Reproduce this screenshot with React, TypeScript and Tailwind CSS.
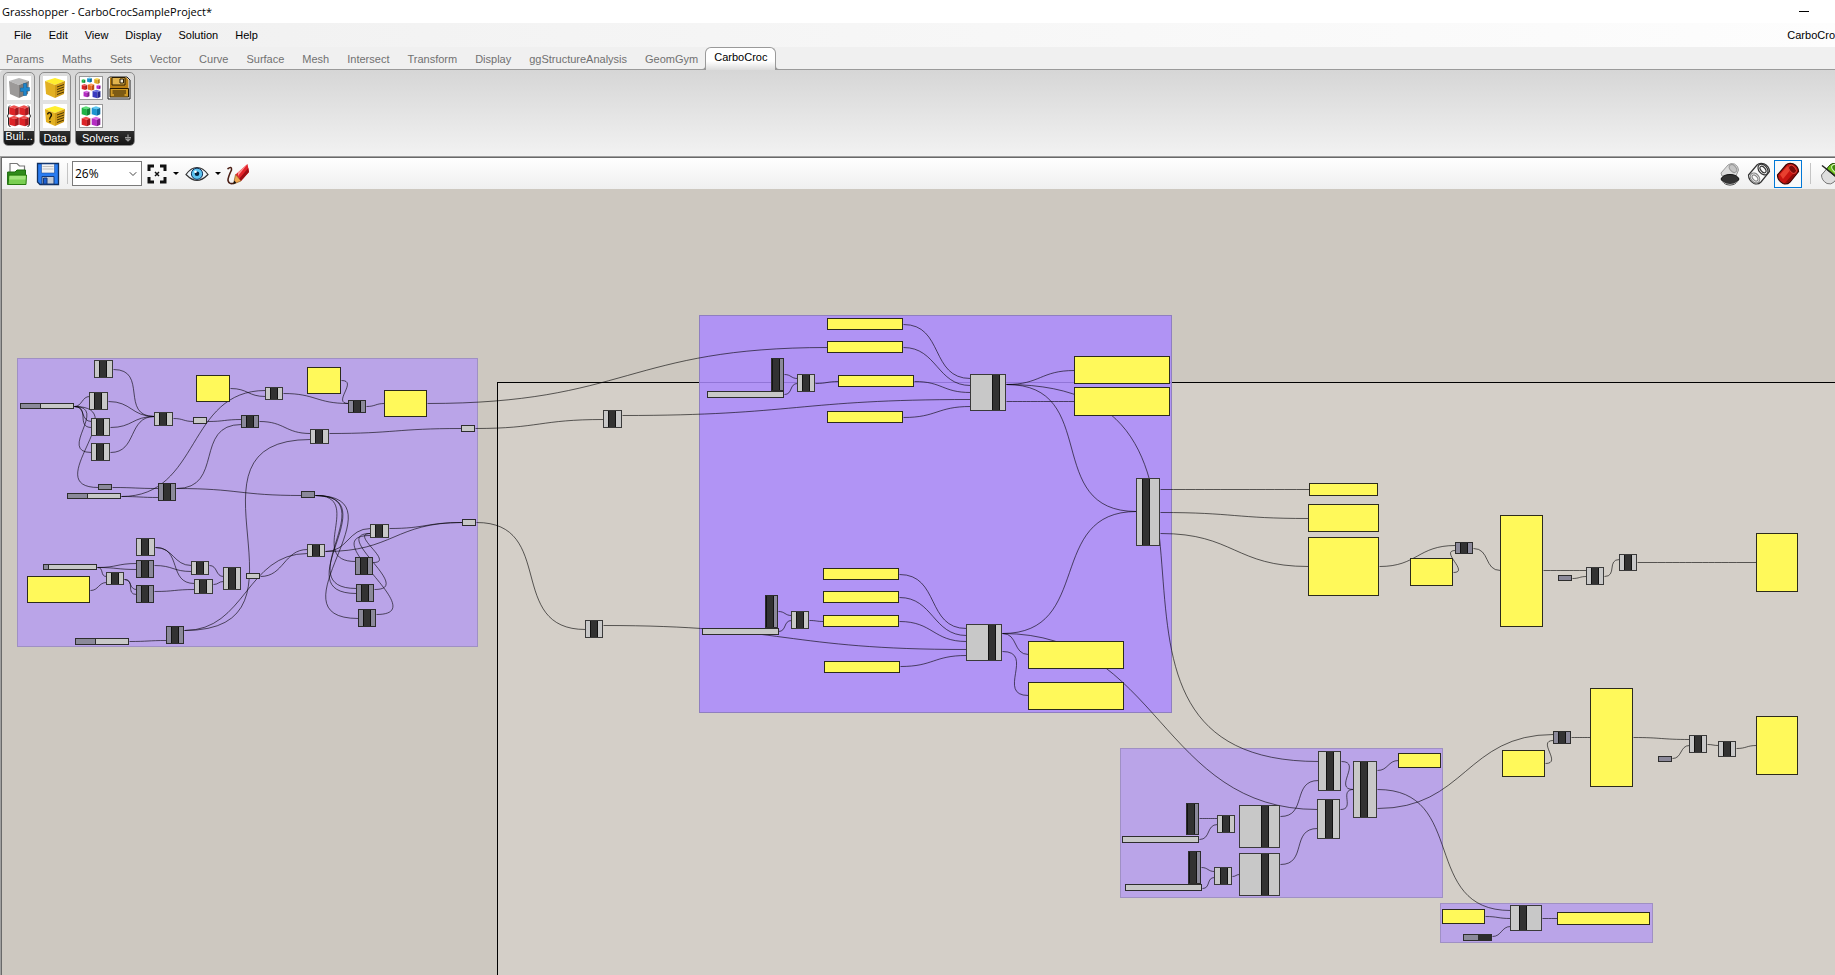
import React from "react";
import { ChevronDown } from "lucide-react";

/* ---------- canvas data ---------- */

type Box = [x: number, y: number, w: number, h: number];
type Component = [x: number, y: number, w: number, h: number, bar: number, dim?: 1];
type Slider = [x: number, y: number, w: number, h: number, filled: number];
type Wire = [x1: number, y1: number, x2: number, y2: number];

const OX = 2;
const OY = 189;

const softGroups: Box[] = [
  [17, 358, 461, 289],
  [1120, 748, 323, 150],
  [1440, 903, 213, 40],
];

const strongGroup: Box = [699, 315, 473, 398];

const panels: Box[] = [
  [196, 375, 34, 27], [307, 367, 34, 27], [384, 390, 43, 27], [27, 576, 63, 27],
  [827, 318, 76, 12], [827, 341, 76, 12], [838, 375, 76, 12], [827, 411, 76, 12],
  [1074, 356, 96, 28], [1074, 387, 96, 29],
  [823, 568, 76, 12], [823, 591, 76, 12], [823, 615, 76, 12], [824, 661, 76, 12],
  [1028, 641, 96, 28], [1028, 682, 96, 28],
  [1309, 483, 69, 13], [1308, 504, 71, 28], [1308, 537, 71, 59],
  [1410, 558, 43, 28], [1500, 515, 43, 112], [1756, 533, 42, 59],
  [1502, 750, 43, 27], [1590, 688, 43, 99], [1756, 716, 42, 59],
  [1398, 753, 43, 15], [1442, 909, 43, 15], [1557, 912, 93, 13],
];

const components: Component[] = [
  [94, 360, 19, 18, 5], [89, 392, 19, 18, 5], [91, 418, 19, 18, 5], [91, 443, 19, 18, 5],
  [154, 412, 19, 14, 5], [241, 415, 18, 13, 5, 1], [158, 483, 18, 18, 5, 1],
  [136, 538, 19, 18, 5], [106, 572, 18, 13, 5], [136, 560, 18, 18, 5, 1],
  [136, 585, 18, 18, 5, 1], [191, 561, 18, 14, 5], [194, 579, 19, 15, 5],
  [223, 567, 18, 23, 5], [166, 626, 18, 18, 5, 1], [265, 387, 18, 13, 5],
  [348, 400, 18, 13, 5, 1], [310, 429, 19, 15, 5], [307, 544, 18, 13, 5],
  [370, 524, 19, 14, 5], [355, 557, 18, 18, 5, 1], [356, 584, 18, 18, 5, 1],
  [358, 609, 18, 18, 5, 1], [603, 410, 19, 18, 5], [585, 620, 18, 18, 5],
  [771, 358, 13, 33, 0, 1], [797, 374, 18, 18, 5], [970, 374, 36, 37, 22],
  [1136, 478, 24, 68, 6], [765, 595, 13, 33, 0, 1], [791, 611, 18, 18, 5],
  [966, 624, 36, 37, 22], [1186, 803, 13, 32, 0, 1], [1188, 851, 13, 33, 0, 1],
  [1217, 815, 18, 18, 5], [1214, 867, 18, 18, 6], [1239, 805, 41, 43, 22],
  [1239, 853, 41, 43, 22], [1318, 751, 23, 40, 8], [1317, 799, 23, 40, 8],
  [1353, 761, 24, 57, 7], [1455, 542, 18, 12, 5, 1], [1586, 567, 18, 18, 5],
  [1619, 554, 18, 17, 5], [1553, 731, 18, 13, 5, 1], [1689, 735, 18, 18, 5],
  [1718, 741, 18, 16, 5], [1510, 905, 32, 26, 9],
];

const sliders: Slider[] = [
  [20, 403, 54, 6, 20], [67, 493, 54, 6, 20], [43, 564, 54, 6, 5], [75, 638, 54, 7, 20],
  [707, 391, 77, 7, 0], [702, 628, 77, 7, 0], [1122, 836, 77, 7, 0], [1125, 884, 77, 7, 0],
  [193, 417, 14, 7, 0], [98, 484, 14, 6, 14], [246, 573, 14, 6, 0], [461, 425, 14, 7, 0],
  [301, 491, 14, 7, 14], [462, 519, 14, 7, 0], [1558, 575, 14, 6, 14], [1658, 756, 14, 6, 14],
];

const wires: Wire[] = [
  [113, 369, 154, 416], [74, 406, 89, 396], [74, 406, 91, 421], [74, 406, 91, 427],
  [74, 406, 91, 452], [74, 406, 98, 487], [108, 401, 154, 416], [110, 427, 154, 416],
  [110, 452, 154, 416], [173, 418, 193, 421], [207, 421, 241, 419], [112, 487, 158, 488],
  [176, 488, 241, 424], [121, 496, 158, 497], [121, 496, 265, 390], [230, 388, 265, 396],
  [176, 488, 301, 495], [97, 567, 136, 563], [97, 567, 136, 569], [97, 567, 106, 576],
  [90, 590, 106, 582], [155, 547, 191, 565], [155, 547, 194, 583], [154, 565, 191, 571],
  [124, 579, 136, 589], [124, 579, 136, 594], [154, 591, 194, 589], [209, 565, 223, 576],
  [213, 584, 223, 581], [129, 641, 166, 640], [184, 630, 310, 439], [184, 630, 307, 553],
  [260, 576, 307, 549], [325, 551, 370, 528], [325, 551, 462, 522], [389, 528, 462, 522],
  [315, 495, 355, 561], [315, 495, 356, 588], [315, 495, 356, 593], [315, 495, 358, 618],
  [373, 562, 370, 533], [374, 589, 370, 533], [376, 614, 370, 535],
  [283, 393, 348, 403], [341, 380, 348, 403], [366, 406, 384, 403], [259, 421, 310, 433],
  [329, 433, 461, 428], [475, 428, 603, 419], [427, 403, 827, 347], [476, 522, 585, 629],
  [622, 415, 970, 399], [603, 625, 966, 649],
  [903, 324, 970, 378], [903, 347, 970, 385], [914, 381, 970, 392], [903, 417, 970, 406],
  [784, 374, 797, 378], [784, 394, 797, 383], [815, 383, 838, 381],
  [1006, 384, 1074, 370], [1006, 384, 1318, 761], [1006, 384, 1136, 511], [1006, 401, 1074, 401],
  [899, 574, 966, 628], [899, 597, 966, 635], [899, 621, 966, 641], [900, 666, 966, 655],
  [778, 611, 791, 615], [778, 631, 791, 620], [809, 620, 823, 621],
  [1002, 633, 1136, 511], [1002, 633, 1028, 654], [1002, 633, 1317, 809], [1002, 651, 1028, 695],
  [1160, 489, 1309, 489], [1160, 512, 1308, 518], [1160, 533, 1308, 566],
  [1379, 566, 1455, 545], [1453, 572, 1455, 550], [1473, 548, 1500, 570], [1543, 570, 1586, 570],
  [1572, 578, 1586, 576], [1604, 576, 1619, 559], [1637, 562, 1756, 562],
  [1199, 818, 1217, 818], [1199, 839, 1217, 824], [1201, 867, 1214, 871], [1202, 888, 1214, 877],
  [1232, 876, 1239, 874], [1280, 816, 1318, 780], [1280, 864, 1317, 828],
  [1341, 761, 1353, 789], [1340, 809, 1353, 789], [1377, 770, 1398, 760],
  [1377, 789, 1510, 910], [1377, 808, 1553, 734], [1545, 763, 1553, 740],
  [1571, 737, 1590, 737], [1633, 737, 1689, 739], [1672, 758, 1689, 745],
  [1707, 744, 1718, 745], [1736, 748, 1756, 745], [1485, 916, 1510, 918],
  [1492, 936, 1510, 926], [1542, 918, 1557, 918],
];

function wirePath([x1, y1, x2, y2]: Wire) {
  const d = Math.max(Math.abs(x2 - x1) / 2, Math.abs(y2 - y1) * 0.75);
  return `M${x1} ${y1}C${x1 + d} ${y1} ${x2 - d} ${y2} ${x2} ${y2}`;
}

const place = (x: number, y: number, w: number, h: number) => ({
  left: x - OX,
  top: y - OY,
  width: w,
  height: h,
});

/* ---------- canvas ---------- */

function Canvas() {
  return (
    <main className="relative min-h-0 flex-1 overflow-hidden bg-[#cdc8c0]">
      <div className="absolute top-[193px] right-0 bottom-0 left-[495px] border-t border-l border-black bg-[#d4cfc8]" />
      {softGroups.map((g, i) => (
        <div key={i} className="absolute border border-[#9f90c4] bg-[#baa4e8]" style={place(...g)} />
      ))}
      <div className="absolute border border-[#8f7fc0] bg-[#aa8afd]/85" style={place(...strongGroup)} />
      <svg className="absolute inset-0 size-full" fill="none" stroke="#000" strokeOpacity="0.6" aria-hidden="true">
        <g transform="translate(-1.5 -188.5)">
          {wires.map((w, i) => (
            <path key={i} d={wirePath(w)} />
          ))}
        </g>
      </svg>
      {panels.map((p, i) => (
        <div key={i} className="absolute border border-[#2c2b1c] bg-[#fff95a]" style={place(...p)} />
      ))}
      {sliders.map(([x, y, w, h, filled], i) => (
        <div key={i} className="absolute flex border border-[#2d2d2d] bg-[#c8c8c8]" style={place(x, y, w, h)}>
          {filled > 0 && (
            <div
              className={filled < w ? "border-r border-[#2d2d2d] bg-[#8b899a]" : "bg-[#8b899a]"}
              style={{ width: filled }}
            />
          )}
        </div>
      ))}
      <div className="absolute flex border border-[#2d2d2d] bg-[#8b899a]" style={place(1463, 934, 29, 7)}>
        <div className="ml-auto w-[13px] bg-[#2c2c2c]" />
      </div>
      {components.map(([x, y, w, h, bar, dim], i) => (
        <div
          key={i}
          className={
            dim
              ? "absolute flex border border-[#2d2d2d] bg-[#8b899a]"
              : "absolute flex border border-[#3a3a3a] bg-[#c8c8c8]"
          }
          style={{ ...place(x, y, w, h), paddingLeft: Math.max(bar - 1, 0) }}
        >
          <div className="w-2 border-x border-[#121212] bg-[#323232]" />
        </div>
      ))}
    </main>
  );
}

/* ---------- ribbon icons ---------- */

type CubeProps = { x: number; y: number; r: number; top: string; left: string; right: string };

function Cube({ x, y, r, top, left, right }: CubeProps) {
  const w = r * 0.92;
  const shoulder = y - r * 0.68;
  const front = y - r * 0.38;
  const foot = y + r * 0.7;
  return (
    <g>
      <path d={`M${x} ${y - r}L${x + w} ${shoulder}L${x + r * 0.2} ${front}L${x - w} ${shoulder}Z`} fill={top} />
      <path d={`M${x - w} ${shoulder}L${x + r * 0.2} ${front}V${y + r}L${x - w} ${foot}Z`} fill={left} />
      <path d={`M${x + w} ${shoulder}L${x + r * 0.2} ${front}V${y + r}L${x + w} ${foot}Z`} fill={right} />
    </g>
  );
}

const red = { top: "#f0504e", left: "#dc2327", right: "#a5161c" };
const green = { top: "#5ee07a", left: "#1fb345", right: "#128335" };
const blue = { top: "#5cc8f2", left: "#1b94d0", right: "#0c6b9f" };
const navy = { top: "#6870e0", left: "#3a3cc0", right: "#25268c" };
const gold = { top: "#ffe14a", left: "#e0a91f", right: "#b98312" };
const purple = { top: "#da6be4", left: "#b42bc2", right: "#7f1a8c" };
const orange = { top: "#ffa05a", left: "#ec6a1c", right: "#bb4c0e" };

function BigCube({ top, left, right }: { top: string; left: string; right: string }) {
  return (
    <>
      <path d="M12 2L22 5L12 9L2 5Z" fill={top} />
      <path d="M2 5L12 9V22L3 18Z" fill={left} />
      <path d="M22 5L12 9V22L21 18Z" fill={right} />
    </>
  );
}

const iconBuild = (
  <>
    <rect width="24" height="24" fill="#fff" />
    <BigCube top="#b9b9b9" left="#9c9a99" right="#7d7b7a" />
    <path d="M16.500 7.500h3v4h3v3.500h-3v4.500h-3V15.500h-3V12h3Z" fill="#1e86cc" stroke="#0d5f9b" strokeWidth=".5" />
  </>
);
const iconAssembly = (
  <>
    <rect width="24" height="24" fill="#fff" />
    <Cube x={7} y={6.500} r={5.200} {...red} />
    <Cube x={17} y={6.500} r={5.200} {...red} />
    <Cube x={7} y={17} r={5.200} {...red} />
    <Cube x={17} y={17} r={5.200} {...red} />
    <path d="M3 1.500Q1.500 2 1.500 5V10L.5 12L1.500 14V20Q1.500 22.500 3.500 22.500M21 1.500Q22.500 2 22.500 5V10L23.500 12L22.500 14V20Q22.500 22.500 20.500 22.500" fill="none" stroke="#222" />
  </>
);
const iconData = (
  <>
    <rect width="24" height="24" fill="#fff" />
    <BigCube top="#ffee2e" left="#e2b021" right="#cf9a18" />
    <path d="M14 11L21 8.500M14 13.500L21 11M14 16L21 13.500M14 18.500L21 16" stroke="#4d3806" />
  </>
);
const iconQuery = (
  <>
    <rect width="24" height="24" fill="#fff" />
    <BigCube top="#ffee2e" left="#e2b021" right="#cf9a18" />
    <path d="M14 11L21 8.500M14 13.500L21 11M14 16L21 13.500M14 18.500L21 16" stroke="#4d3806" />
    <path d="M4.500 10.500Q5 8 7.500 9Q9.500 11 7.500 13Q6.500 14 6.800 15.500M7 17V18.500" fill="none" stroke="#1a1404" strokeWidth="1.300" />
  </>
);
const iconSolveMany = (
  <>
    <rect x=".5" y=".5" width="23" height="23" fill="#fff" stroke="#999" />
    <Cube x={4.500} y={5} r={2} {...green} />
    <Cube x={10.500} y={4} r={2.600} {...blue} />
    <Cube x={18} y={5} r={3} {...gold} />
    <Cube x={5.500} y={11} r={3} {...red} />
    <Cube x={12} y={11} r={3.500} {...orange} />
    <Cube x={19.500} y={11} r={2.200} {...purple} />
    <Cube x={7.500} y={18} r={3.200} {...purple} />
    <Cube x={17.500} y={18} r={4.300} {...navy} />
  </>
);
const iconDisk = (
  <>
    <path d="M2.500 1H20L23 4V23H1V2.500Z" fill="#f4f4f4" stroke="#222" />
    <path d="M3 1.500H19.500L21.500 4V21H3Z" fill="#b97f14" />
    <path d="M5 1.500H18V9H5Z" fill="#e2b44d" stroke="#2a1c02" />
    <path d="M13 3H16.500V7H13Z" fill="#efe7d0" stroke="#2a1c02" />
    <path d="M3 12.500H21.500V21H3Z" fill="#d09a26" stroke="#2a1c02" />
    <path d="M5.500 15H19M5.500 17H19M7 19H17.500" stroke="#2a1c02" />
  </>
);
const iconSolveFour = (
  <>
    <rect x=".5" y=".5" width="23" height="23" fill="#fff" stroke="#999" />
    <Cube x={7} y={7} r={4.700} {...green} />
    <Cube x={17} y={7} r={4.700} {...blue} />
    <Cube x={7} y={17.500} r={4.700} {...red} />
    <Cube x={17} y={17.500} r={4.700} {...purple} />
  </>
);

function IconButton({ label, children }: { label: string; children: React.ReactNode }) {
  return (
    <button type="button" aria-label={label} className="size-6">
      <svg viewBox="0 0 24 24" className="size-6">{children}</svg>
    </button>
  );
}

function RibbonPanel({ children, footer }: { children: React.ReactNode; footer: React.ReactNode }) {
  return (
    <section className="flex flex-col overflow-hidden rounded-[5px] border border-[#8c8c8c] bg-gradient-to-b from-[#dcdcdc] to-[#ebebeb]">
      <div className="px-[3px] pt-[3px] pb-[3px]">{children}</div>
      <div className="flex h-3.5 items-center justify-center bg-gradient-to-b from-[#303030] to-[#141414] text-[11px] leading-[14px] text-white">
        {footer}
      </div>
    </section>
  );
}

/* ---------- toolbar icons ---------- */

function OpenIcon() {
  return (
    <svg viewBox="0 0 24 24" className="size-6">
      <path d="M5 12V1.500H12L14.500 4H19.500V12" fill="#fff" stroke="#777" strokeWidth="1.200" />
      <path d="M2.600 22.500V10H10L12 8H20.500V12L19.500 22Z" fill="#2f8a1b" stroke="#1d6b0f" />
      <path d="M3 22.500L4 13H21.500L21 22.500Z" fill="#79cf52" stroke="#26790f" />
      <path d="M4.600 14H20.800L20.300 17.500H4.300Z" fill="#a2e37d" />
    </svg>
  );
}

function SaveIcon() {
  return (
    <svg viewBox="0 0 24 24" className="size-6">
      <path d="M1.500 1.500H22.500V22.500H4L1.500 20Z" fill="#2a7cf0" stroke="#12305f" strokeWidth="1.300" />
      <path d="M5.500 2H18.500V11H5.500Z" fill="#f2f2f2" stroke="#1d4f9f" strokeWidth=".6" />
      <path d="M6.500 4.500H17.500M6.500 7H17.500" stroke="#c0c0c0" />
      <path d="M6 14.500H18V22H6Z" fill="#c5cbd4" stroke="#173a78" />
      <path d="M7.500 16H11V22H7.500Z" fill="#1d5fd0" stroke="#173a78" />
    </svg>
  );
}

function ZoomExtentsIcon() {
  return (
    <svg viewBox="0 0 20 20" className="size-5" fill="none" stroke="#111" strokeWidth="3">
      <path d="M2 7V2H7M13 2H18V7M18 13V18H13M7 18H2V13" />
      <path d="M8 8L12 12M12 8L8 12" strokeWidth="1.500" />
    </svg>
  );
}

function EyeIcon() {
  return (
    <svg viewBox="0 0 24 18" className="h-[18px] w-6">
      <path d="M1 9.500Q6 2.500 12 2.500T23 9.500Q17 15.500 12 15.500T1 9.500Z" fill="#eef6fb" stroke="#333" strokeWidth="1.200" />
      <circle cx="12" cy="8.800" r="5.600" fill="#5cc4f2" stroke="#0c2f58" />
      <circle cx="12" cy="8.800" r="2.300" fill="#06223f" />
      <circle cx="10.500" cy="6.800" r="1.300" fill="#fff" />
    </svg>
  );
}

function SketchIcon() {
  return (
    <svg viewBox="0 0 24 24" className="size-6">
      <path d="M1.500 7Q6 3.500 5.500 8Q2 15 2 18.500Q3 23 8.500 21" fill="none" stroke="#4b1e14" strokeWidth="1.600" />
      <path d="M21.500 2L23 10L15 19L9.500 12.500Z" fill="#e3242c" />
      <path d="M21.500 2L12 10.500L12 14Z" fill="#ff8f8f" />
      <path d="M22.300 6L13 17L15 19L23 10Z" fill="#9c0e15" />
      <path d="M9.500 12.500L15 19L7.500 22Z" fill="#f0a850" stroke="#7d4410" strokeWidth=".6" />
      <path d="M8.500 18.600L10.300 20.900L7 22.300Z" fill="#111" />
    </svg>
  );
}

function Caret() {
  return (
    <svg viewBox="0 0 6 3" className="h-[3px] w-1.5">
      <path d="M0 0H6L3 3Z" fill="#000" />
    </svg>
  );
}

const cylinderBody = "M1.500 13L10 3Q12.500 .5 17 1.800Q22.500 4.500 22.500 9.500L14 20Q11 23 7 21.500Q1.500 18.500 1.500 13Z";

function HiddenPreviewIcon() {
  return (
    <svg viewBox="0 0 24 24" className="size-6">
      <path d="M3 11L10 3Q12.500 .8 16.500 2Q20.500 4 20.500 8L18 14H4Z" fill="#dcdcdc" stroke="#999" />
      <ellipse cx="15" cy="6.500" rx="3" ry="4.500" transform="rotate(-40 15 6.500)" fill="#c4c4c4" stroke="#999" />
      <path d="M3 17Q5 12.500 12 12.500T21 17Q18 23 12 23T3 17Z" fill="#333" stroke="#111" />
      <path d="M4 19.500Q12 25.500 20 19.500" fill="none" stroke="#aaa" />
    </svg>
  );
}

function WirePreviewIcon() {
  return (
    <svg viewBox="0 0 24 24" className="size-6" fill="none" stroke="#333" strokeWidth="1.200">
      <path d={cylinderBody} fill="#fafafa" />
      <ellipse cx="16" cy="7.500" rx="4.200" ry="6" transform="rotate(-40 16 7.500)" />
      <ellipse cx="16" cy="7.500" rx="2.200" ry="3.800" transform="rotate(-40 16 7.500)" />
      <ellipse cx="8" cy="16" rx="4" ry="5.500" transform="rotate(-40 8 16)" stroke="#888" />
      <ellipse cx="8" cy="16" rx="2.200" ry="3.600" transform="rotate(-40 8 16)" stroke="#888" />
    </svg>
  );
}

function ShadedPreviewIcon() {
  return (
    <svg viewBox="0 0 24 24" className="size-6">
      <path d={cylinderBody} fill="#c81410" stroke="#3c0402" strokeWidth="1.200" />
      <path d="M4 12.500L11.500 4L13.500 9L7 17Z" fill="#e8402f" />
      <path d="M21.500 10.500L13.500 20L9 21L16.500 12.500Z" fill="#8c0a08" />
      <ellipse cx="16.500" cy="7.300" rx="3" ry="4.800" transform="rotate(-40 16.500 7.300)" fill="#7a0a08" stroke="#e2443a" strokeWidth=".9" />
    </svg>
  );
}

function SelectedOnlyIcon() {
  return (
    <svg viewBox="0 0 24 24" className="size-6 shrink-0">
      <path d={cylinderBody} fill="#dedede" stroke="#777" />
      <path d="M6.500 7.200L10 3Q12.500 .5 17 1.800Q22.500 4.500 22.500 9.500L17 16Z" fill="#6fc21d" stroke="#234d05" />
      <ellipse cx="15.500" cy="6.500" rx="3" ry="4.500" transform="rotate(-40 15.500 6.500)" fill="#3f8a0c" stroke="#d8f5b8" />
      <path d="M2 3.500L19 17" stroke="#222" strokeWidth="1.500" />
    </svg>
  );
}

/* ---------- chrome ---------- */

const menus = ["File", "Edit", "View", "Display", "Solution", "Help"];
const tabs = [
  "Params", "Maths", "Sets", "Vector", "Curve", "Surface", "Mesh", "Intersect",
  "Transform", "Display", "ggStructureAnalysis", "GeomGym",
];

export default function App() {
  return (
    <div className="flex h-screen flex-col overflow-hidden bg-[#f0f0f0] font-['Liberation_Sans',Arial,sans-serif] text-[11px] text-black">
      <header className="flex h-[23px] shrink-0 items-center justify-between bg-white pr-[26px] pl-0.5">
        <h1 className="font-['Open_Sans','Noto_Sans',sans-serif] text-[11px] leading-none whitespace-nowrap">
          Grasshopper - CarboCrocSampleProject*
        </h1>
        <button type="button" aria-label="Minimize" className="flex h-5 items-center">
          <span className="h-px w-2.5 bg-black" />
        </button>
      </header>

      <nav className="flex h-6 shrink-0 items-center bg-gradient-to-r from-[#f0f0f0] to-[#fdfdfd] pl-1.5">
        {menus.map((m) => (
          <button key={m} type="button" className="pr-[9px] pl-2">{m}</button>
        ))}
        <button type="button" className="ml-auto shrink-0 text-left whitespace-nowrap">
          CarboCro
        </button>
      </nav>

      <div className="flex h-[23px] shrink-0 items-stretch border-b border-[#9a9a9a] text-[#707070]">
        {tabs.map((t) => (
          <button key={t} type="button" className="px-[9px] pt-0.5 first:pl-1.5">{t}</button>
        ))}
        <button
          type="button"
          className="relative -mb-px -ml-0.5 rounded-t-[6px] border border-b-0 border-[#9a9a9a] bg-gradient-to-b from-white from-60% to-[#dcdcdc] px-2 pb-1 text-black before:absolute before:bottom-0 before:-left-1 before:size-1 before:rounded-br-[4px] before:border-r before:border-b before:border-[#9a9a9a] after:absolute after:-right-1 after:bottom-0 after:size-1 after:rounded-bl-[4px] after:border-b after:border-l after:border-[#9a9a9a]"
        >
          CarboCroc
        </button>
      </div>

      <div className="flex h-[86px] shrink-0 items-start gap-1 rounded-tl-[4px] bg-gradient-to-b from-[#d6d6d6] to-[#f2f2f2] pt-0.5 pl-[3px]">
        <RibbonPanel footer={<span className="-mt-1">Buil...</span>}>
          <div className="grid gap-1">
            <IconButton label="Build element">{iconBuild}</IconButton>
            <IconButton label="Build assembly">{iconAssembly}</IconButton>
          </div>
        </RibbonPanel>
        <RibbonPanel footer="Data">
          <div className="grid gap-1">
            <IconButton label="Material data">{iconData}</IconButton>
            <IconButton label="Query data">{iconQuery}</IconButton>
          </div>
        </RibbonPanel>
        <RibbonPanel
          footer={
            <>
              <span className="flex-1 pl-1.5 text-left">Solvers</span>
              <svg viewBox="0 0 8 8" className="mr-0.5 size-2" fill="none" stroke="#999" strokeWidth="1.200">
                <path d="M4 .5V7M1.500 4.500L4 7L6.500 4.500M1 3.500H7" />
              </svg>
            </>
          }
        >
          <div className="grid grid-cols-2 gap-1">
            <IconButton label="Project solver">{iconSolveMany}</IconButton>
            <IconButton label="Save results">{iconDisk}</IconButton>
            <IconButton label="Element solver">{iconSolveFour}</IconButton>
          </div>
        </RibbonPanel>
      </div>

      <div className="flex min-h-0 flex-1 flex-col border-t border-l border-[#a0a0a0]">
        <div className="flex min-h-0 flex-1 flex-col border-t border-l border-[#696969]">
          <div className="flex h-[31px] shrink-0 items-center bg-gradient-to-b from-white to-[#efefef] pl-[3px]">
            <button type="button" aria-label="Open"><OpenIcon /></button>
            <button type="button" aria-label="Save" className="ml-[7px]"><SaveIcon /></button>
            <span className="mr-1 ml-[7px] h-[21px] w-px bg-[#c4c4c4]" />
            <div className="relative">
              <select
                aria-label="Zoom"
                defaultValue="26%"
                className="h-[25px] w-[70px] appearance-none border border-[#7a7a7a] bg-white pl-[2px] font-['Open_Sans','Noto_Sans',sans-serif] text-[12px] leading-none text-black"
              >
                <option>26%</option>
              </select>
              <ChevronDown className="pointer-events-none absolute top-[7px] right-[3px] size-3 text-[#444]" strokeWidth={2} />
            </div>
            <button type="button" aria-label="Zoom extents" className="ml-[5px] flex items-center gap-1.5">
              <ZoomExtentsIcon />
              <Caret />
            </button>
            <button type="button" aria-label="Named views" className="ml-1.5 flex items-center gap-1.5">
              <EyeIcon />
              <Caret />
            </button>
            <button type="button" aria-label="Sketch" className="ml-[5px]"><SketchIcon /></button>
            <div className="ml-auto flex items-center">
              <button type="button" aria-label="Hide preview"><HiddenPreviewIcon /></button>
              <button type="button" aria-label="Wireframe preview" className="ml-[5px]"><WirePreviewIcon /></button>
              <button
                type="button"
                aria-label="Shaded preview"
                className="mx-[3px] flex size-7 items-center justify-center border border-[#0078d7] bg-[#fafafa]"
              >
                <ShadedPreviewIcon />
              </button>
              <span className="mx-[5px] h-[21px] w-px bg-[#c4c4c4]" />
              <button type="button" aria-label="Preview selected" className="ml-1 flex w-[15px] overflow-hidden">
                <SelectedOnlyIcon />
              </button>
            </div>
          </div>
          <Canvas />
        </div>
      </div>
    </div>
  );
}
